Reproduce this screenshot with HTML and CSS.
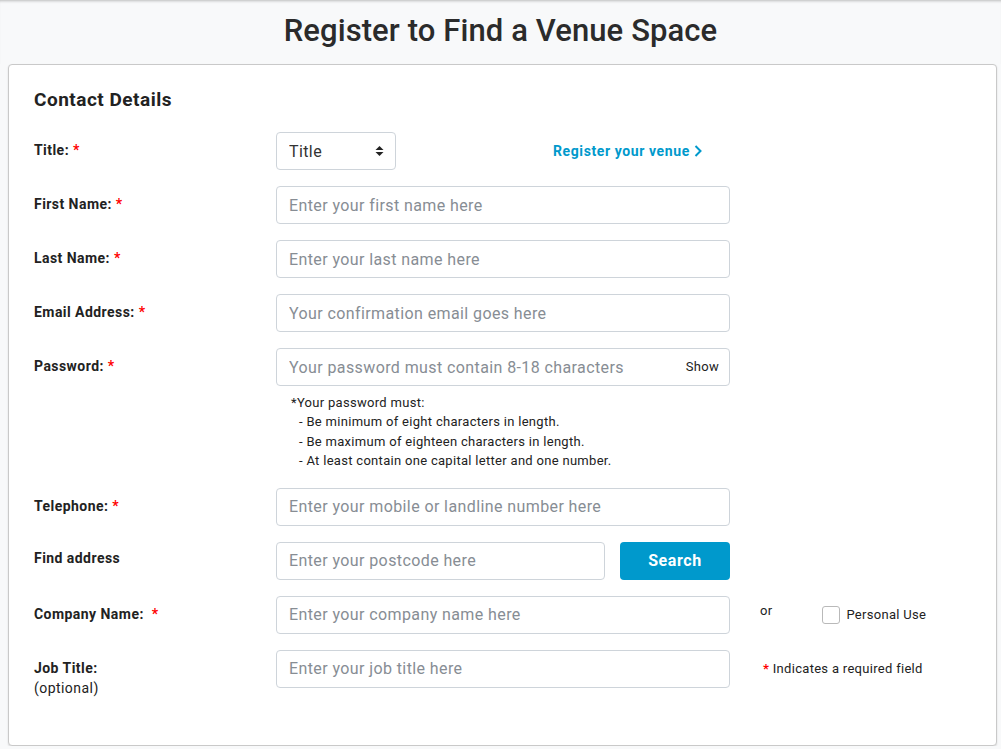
FILE: index.html
```html
<!DOCTYPE html>
<html lang="en">
<head>
    <meta charset="UTF-8">
    <meta name="viewport" content="width=device-width, initial-scale=1.0">
    <title>Register to Find a Venue Space</title>
    <link rel="stylesheet" href="styles.css">
</head>
<body>
    <header>
        <h1>Register to Find a Venue Space</h1>
    </header>
    <div class="card">
        <h2>Contact Details</h2>

        <div class="row">
            <label class="label" for="title">Title: <span class="req">*</span></label>
            <div class="select-wrap">
                <select id="title" class="select">
                    <option>Title</option>
                    <option>Mr</option>
                    <option>Mrs</option>
                    <option>Ms</option>
                    <option>Dr</option>
                </select>
                <svg class="arrows" width="9" height="12" viewBox="0 0 9 12"><path d="M4.5 1 L8.5 5 H0.5 Z M4.5 11 L8.5 7 H0.5 Z" fill="#222"/></svg>
            </div>
            <a class="venue-link" href="#">Register your venue <svg width="8" height="12" viewBox="0 0 8 12"><path d="M1.5 1 L6.5 6 L1.5 11" fill="none" stroke="#0099cc" stroke-width="2"/></svg></a>
        </div>

        <div class="row">
            <label class="label" for="first">First Name: <span class="req">*</span></label>
            <input type="text" id="first" class="input" placeholder="Enter your first name here">
        </div>

        <div class="row">
            <label class="label" for="last">Last Name: <span class="req">*</span></label>
            <input type="text" id="last" class="input" placeholder="Enter your last name here">
        </div>

        <div class="row">
            <label class="label" for="email">Email Address: <span class="req">*</span></label>
            <input type="text" id="email" class="input" placeholder="Your confirmation email goes here">
        </div>

        <div class="row">
            <label class="label" for="password">Password: <span class="req">*</span></label>
            <div class="pw-group">
                <div class="pw-wrap">
                    <input type="password" id="password" class="input" placeholder="Your password must contain 8-18 characters">
                    <span class="show">Show</span>
                </div>
                <div class="hint">
                    <div>*Your password must:</div>
                    <div class="hint-item">- Be minimum of eight characters in length.</div>
                    <div class="hint-item">- Be maximum of eighteen characters in length.</div>
                    <div class="hint-item">- At least contain one capital letter and one number.</div>
                </div>
            </div>
        </div>

        <div class="row">
            <label class="label" for="phone">Telephone: <span class="req">*</span></label>
            <input type="text" id="phone" class="input" placeholder="Enter your mobile or landline number here">
        </div>

        <div class="row">
            <label class="label label-up" for="postcode">Find address</label>
            <div class="find">
                <input type="text" id="postcode" class="input" placeholder="Enter your postcode here">
                <button class="search">Search</button>
            </div>
        </div>

        <div class="row">
            <label class="label" for="company">Company Name: &nbsp;<span class="req">*</span></label>
            <input type="text" id="company" class="input" placeholder="Enter your company name here">
            <span class="or">or</span>
            <label class="personal"><span class="check"></span>Personal Use</label>
        </div>

        <div class="row last">
            <label class="label" for="job">Job Title:<br><span class="optional">(optional)</span></label>
            <input type="text" id="job" class="input" placeholder="Enter your job title here">
            <span class="note"><span class="req">*</span> Indicates a required field</span>
        </div>
    </div>
</body>
</html>
```

FILE: styles.css
```css
body {
    font-family: Roboto, "Liberation Sans", sans-serif;
    margin: 0;
    padding: 0;
    background-color: #f8f9fa;
    color: #222;
}
header {
    box-sizing: border-box;
    height: 64px;
    padding-bottom: 3px;
    box-shadow: inset 0 3px 3px -2px rgba(0, 0, 0, 0.25);
    display: flex;
    align-items: center;
    justify-content: center;
}
h1 {
    margin: 0;
    font-size: 31px;
    font-weight: 500;
    color: #2b2b2b;
    letter-spacing: 0.1px;
}
.card {
    margin: 0 4px 0 8px;
    padding: 24px 25px 47px 25px;
    background-color: #fff;
    border: 1px solid #c9c9c9;
    border-radius: 4px;
    box-shadow: 0 1px 2px rgba(0, 0, 0, 0.12);
}
h2 {
    margin: 0 0 21px 0;
    font-size: 19px;
    line-height: 22px;
    font-weight: 700;
    letter-spacing: 0.5px;
    color: #222;
}
.row {
    display: flex;
    align-items: flex-start;
    margin-bottom: 16px;
}
.row.last {
    margin-bottom: 0;
}
.label {
    width: 242px;
    flex-shrink: 0;
    padding-top: 8px;
    font-size: 14px;
    line-height: 20px;
    font-weight: 700;
    letter-spacing: 0.45px;
    color: #222;
}
.label-up {
    padding-top: 6px;
}
.req {
    color: #f00;
    font-weight: 700;
}
.optional {
    font-weight: 400;
}
.input {
    box-sizing: border-box;
    width: 454px;
    height: 38px;
    padding: 0 12px;
    border: 1px solid #ced4da;
    border-radius: 4px;
    font-family: inherit;
    font-size: 16px;
    letter-spacing: 0.4px;
    color: #222;
    background-color: #fff;
}
.input::placeholder {
    color: #878d94;
}
.select-wrap {
    position: relative;
    width: 120px;
}
.select {
    box-sizing: border-box;
    width: 120px;
    height: 38px;
    padding: 0 12px;
    border: 1px solid #ced4da;
    border-radius: 4px;
    font-family: inherit;
    font-size: 16px;
    letter-spacing: 0.4px;
    color: #333;
    background-color: #fff;
    appearance: none;
    -webkit-appearance: none;
}
.arrows {
    position: absolute;
    right: 12px;
    top: 13px;
    pointer-events: none;
}
.venue-link {
    margin-left: 157px;
    padding-top: 10px;
    font-size: 14px;
    line-height: 18px;
    font-weight: 700;
    letter-spacing: 0.6px;
    color: #0099cc;
    text-decoration: none;
}
.venue-link svg {
    vertical-align: -1px;
}
.pw-group {
    display: flex;
    flex-direction: column;
}
.pw-wrap {
    position: relative;
}
.show {
    position: absolute;
    right: 11px;
    top: 10px;
    font-size: 13px;
    line-height: 17px;
    letter-spacing: 0.3px;
    color: #222;
}
.hint {
    padding: 7px 0 1px 15px;
    font-size: 13px;
    line-height: 19.4px;
    letter-spacing: 0.3px;
    color: #222;
}
.hint-item {
    padding-left: 8px;
}
.find {
    display: flex;
    gap: 15px;
}
.find .input {
    width: 329px;
}
.search {
    width: 110px;
    height: 38px;
    border: none;
    border-radius: 4px;
    background-color: #0099cc;
    color: #fff;
    font-family: inherit;
    font-size: 16px;
    font-weight: 700;
    letter-spacing: 0.6px;
    cursor: pointer;
}
.or {
    margin-left: 30px;
    padding-top: 6px;
    font-size: 13px;
    line-height: 17px;
    letter-spacing: 0.3px;
}
.personal {
    display: flex;
    align-items: center;
    margin-left: 50px;
    padding-top: 10px;
    font-size: 13px;
    line-height: 18px;
    letter-spacing: 0.3px;
}
.check {
    box-sizing: border-box;
    width: 18px;
    height: 18px;
    margin-right: 6px;
    border: 1px solid #b9b9b9;
    border-radius: 3px;
    background-color: #fff;
}
.note {
    margin-left: 33px;
    padding-top: 10px;
    font-size: 13px;
    line-height: 18px;
    letter-spacing: 0.3px;
}
```
